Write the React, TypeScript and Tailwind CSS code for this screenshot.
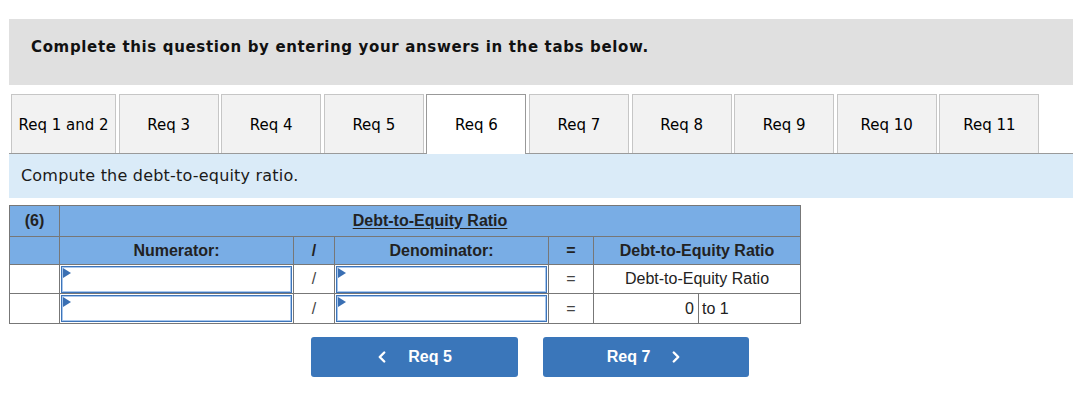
import { ChevronLeft, ChevronRight } from "lucide-react";

const tabs = ["Req 1 and 2", "Req 3", "Req 4", "Req 5", "Req 6", "Req 7", "Req 8", "Req 9", "Req 10", "Req 11"];
const ACTIVE = "Req 6";

const verdana = { fontFamily: '"DejaVu Sans", Verdana, sans-serif' };

const AnswerInput = () => {
    return (
        <div className="relative h-[27px] w-full border border-[#3d74b9] bg-white shadow-[inset_0_0_0_1px_#a9c7ec]">
            <svg className="absolute left-[1px] top-[1px]" width="8" height="10" viewBox="0 0 8 10">
                <polygon points="0,0 8,5 0,10" fill="#3a6fb3" />
            </svg>
            <input type="text" className="h-full w-full bg-transparent px-2 outline-none" />
        </div>
    );
};

const App = () => {
    return (
        <div className="min-h-[402px] bg-white px-[9px] pt-[19px] text-[#1a1a1a]" style={verdana}>
            <div className="h-[66px] w-[1064px] bg-[#e0e0e0] pl-[22px] pt-[18px]">
                <p className="text-[15px] font-bold leading-5 tracking-[0.65px] text-[#111]">
                    Complete this question by entering your answers in the tabs below.
                </p>
            </div>

            <div className="mt-[9px] flex w-[1064px] gap-[2.6px] border-b border-[#9a9a9a] pl-[2px]">
                {tabs.map((tab, i) => {
                    const active = tab === ACTIVE;
                    return (
                        <div
                            key={tab}
                            className={
                                active
                                    ? "-mb-px flex h-[60px] w-[100px] items-center justify-center border border-b-0 border-[#999] bg-white pt-[2px] text-[15px] text-black"
                                    : `flex h-[59px] ${i === 0 ? "w-[105px]" : "w-[100px]"} items-center justify-center border border-b-0 border-[#c6c6c6] bg-[#f2f2f2] pt-[2px] text-[15px] text-black`
                            }
                        >
                            {tab}
                        </div>
                    );
                })}
            </div>

            <div className="flex h-[44px] w-[1064px] items-center bg-[#daebf8] pl-[12px] text-[16px] tracking-[0.2px] text-[#1a1a1a]">
                Compute the debt-to-equity ratio.
            </div>

            <table
                className="mt-[7px] w-[791px] table-fixed border-collapse text-[16px] text-[#222]"
                style={{ fontFamily: '"Liberation Sans", Arial, sans-serif' }}
            >
                <colgroup>
                    <col className="w-[50px]" />
                    <col className="w-[234px]" />
                    <col className="w-[41px]" />
                    <col className="w-[214px]" />
                    <col className="w-[45px]" />
                    <col className="w-[105px]" />
                    <col className="w-[102px]" />
                </colgroup>
                <tbody>
                    <tr className="h-[31px] bg-[#79ade5] font-bold">
                        <td className="border border-[#777] text-center">(6)</td>
                        <td colSpan={6} className="border border-[#777] text-center">
                            <span className="underline underline-offset-2">Debt-to-Equity Ratio</span>
                        </td>
                    </tr>
                    <tr className="h-[28px] bg-[#79ade5] font-bold">
                        <td className="border border-[#777]"></td>
                        <td className="border border-[#777] text-center">Numerator:</td>
                        <td className="border border-[#777] text-center">/</td>
                        <td className="border border-[#777] text-center">Denominator:</td>
                        <td className="border border-[#777] text-center">=</td>
                        <td colSpan={2} className="border border-[#777] text-center">Debt-to-Equity Ratio</td>
                    </tr>
                    <tr className="h-[29px]">
                        <td className="border border-[#777]"></td>
                        <td className="border border-[#777] p-0 px-px"><AnswerInput /></td>
                        <td className="border border-[#777] text-center text-[#444]">/</td>
                        <td className="border border-[#777] p-0 px-px"><AnswerInput /></td>
                        <td className="border border-[#777] text-center text-[#444]">=</td>
                        <td colSpan={2} className="border border-[#777] text-center">Debt-to-Equity Ratio</td>
                    </tr>
                    <tr className="h-[30px]">
                        <td className="border border-[#777]"></td>
                        <td className="border border-[#777] p-0 px-px"><AnswerInput /></td>
                        <td className="border border-[#777] text-center text-[#444]">/</td>
                        <td className="border border-[#777] p-0 px-px"><AnswerInput /></td>
                        <td className="border border-[#777] text-center text-[#444]">=</td>
                        <td className="border border-[#777] pr-[4px] text-right">0</td>
                        <td className="border border-[#777] pl-[3px] text-left">to 1</td>
                    </tr>
                </tbody>
            </table>

            <div className="mt-[13px] flex gap-[25px] pl-[302px]" style={{ fontFamily: '"Liberation Sans", Arial, sans-serif' }}>
                <button className="flex h-[40px] w-[207px] items-center justify-center gap-[17px] rounded-[3px] bg-[#3a76ba] text-[16px] font-bold text-white">
                    <ChevronLeft size={18} strokeWidth={3.2} className="-ml-[4px]" />
                    <span>Req 5</span>
                </button>
                <button className="flex h-[40px] w-[206px] items-center justify-center gap-[17px] rounded-[3px] bg-[#3a76ba] text-[16px] font-bold text-white">
                    <span>Req 7</span>
                    <ChevronRight size={18} strokeWidth={3.2} />
                </button>
            </div>
        </div>
    );
};

export default App;
